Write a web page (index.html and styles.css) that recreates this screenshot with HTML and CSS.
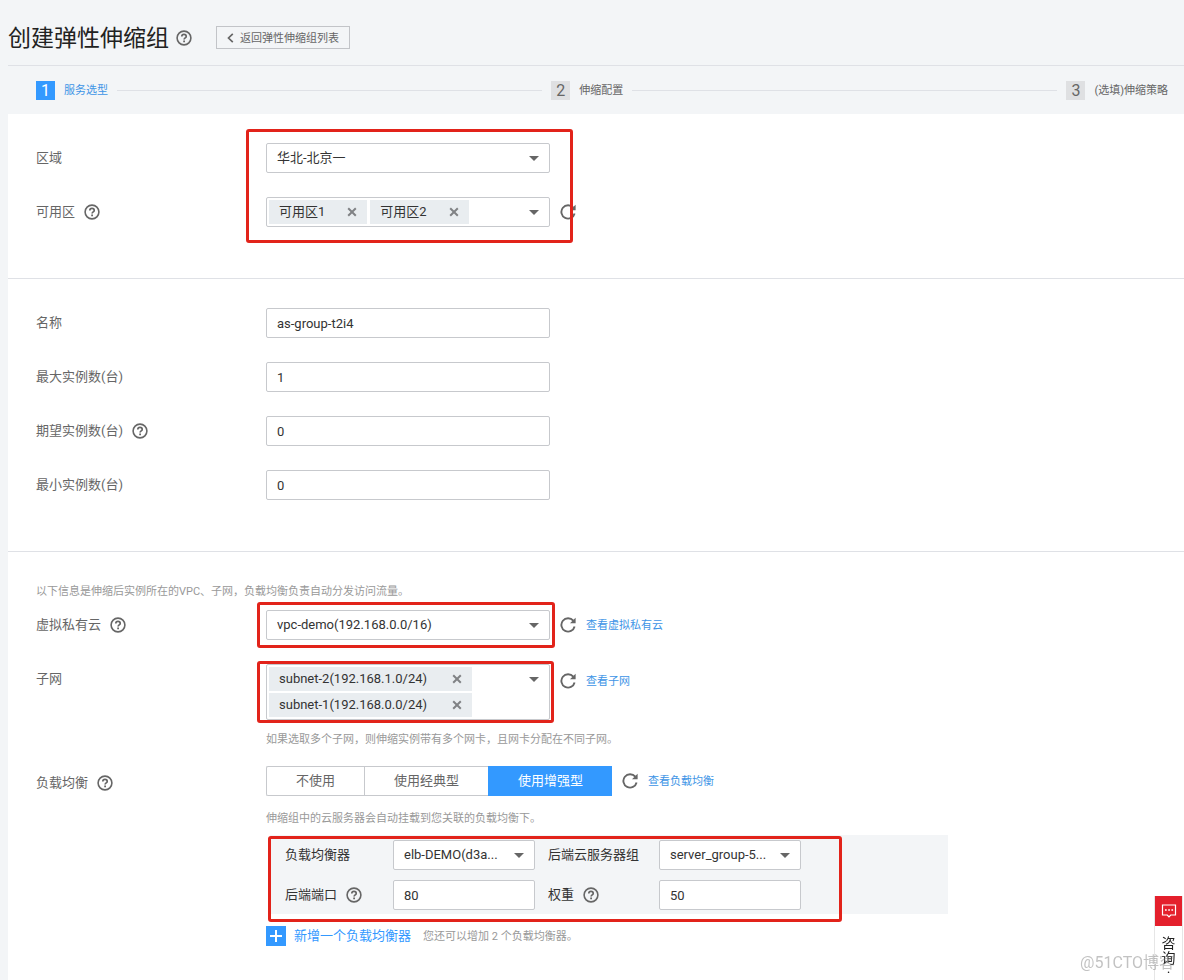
FILE: index.html
```html
<!DOCTYPE html>
<html lang="zh-CN">
<head>
<meta charset="utf-8">
<meta name="viewport" content="width=device-width, initial-scale=1">
<title>创建弹性伸缩组</title>
<link rel="stylesheet" href="styles.css">
</head>
<body>
<svg class="sprite" aria-hidden="true">
  <symbol id="help" viewBox="0 0 16 16"><circle cx="8" cy="8" r="6.9" fill="none" stroke="currentColor" stroke-width="1.6"/><path d="M5.800 6.500C5.800 5.100 6.700 4.400 8 4.400s2.200.8 2.200 2c0 1.500-2.100 1.600-2.100 3.200" fill="none" stroke="currentColor" stroke-width="1.700"/><path d="M7.200 10.500h1.800v1.700H7.200z" fill="currentColor"/></symbol>
  <symbol id="refresh" viewBox="0 0 16 16"><path d="M13.300 3.700A6.700 6.700 0 1 0 14.600 9.500" fill="none" stroke="currentColor" stroke-width="1.900"/><path d="M15.600.7v5.600H10z" fill="currentColor"/></symbol>
  <symbol id="close" viewBox="0 0 10 10"><path d="M1.200 1.200l7.600 7.600M8.800 1.200L1.200 8.800" fill="none" stroke="currentColor" stroke-width="2"/></symbol>
</svg>

<header class="page-head">
  <h1 class="title">创建弹性伸缩组</h1>
  <button class="icon-btn" type="button" aria-label="帮助"><svg class="icon"><use href="#help"/></svg></button>
  <button class="back" type="button"><svg class="chevron" viewBox="0 0 7 10"><path d="M5.800.8L1.500 5l4.300 4.200" fill="none" stroke="currentColor" stroke-width="1.700"/></svg><span class="small">返回弹性伸缩组列表</span></button>
</header>

<ol class="steps">
  <li class="step step-active"><span class="step-no">1</span><span class="small">服务选型</span></li>
  <li class="step"><span class="step-no">2</span><span class="small">伸缩配置</span></li>
  <li class="step"><span class="step-no">3</span><span class="small">(选填)伸缩策略</span></li>
</ol>

<main class="form">
  <section class="section">
    <div class="row">
      <div class="label"><label for="region">区域</label></div>
      <div class="line">
        <div class="select field"><select id="region"><option>华北-北京一</option></select></div>
      </div>
    </div>
    <div class="row">
      <div class="label"><span id="zone-label">可用区</span><button class="icon-btn" type="button" aria-label="可用区帮助"><svg class="icon"><use href="#help"/></svg></button></div>
      <div class="line">
        <div class="multi field" role="group" aria-labelledby="zone-label">
          <span class="tag">可用区1<button class="remove" type="button" aria-label="移除可用区1"><svg class="cross"><use href="#close"/></svg></button></span>
          <span class="tag">可用区2<button class="remove" type="button" aria-label="移除可用区2"><svg class="cross"><use href="#close"/></svg></button></span>
        </div>
        <button class="icon-btn" type="button" aria-label="刷新可用区"><svg class="icon"><use href="#refresh"/></svg></button>
      </div>
    </div>
    <div class="mark mark-region"></div>
  </section>

  <section class="section">
    <div class="row">
      <div class="label"><label for="name">名称</label></div>
      <input class="input field" id="name" type="text" value="as-group-t2i4">
    </div>
    <div class="row">
      <div class="label"><label for="max">最大实例数(台)</label></div>
      <input class="input field" id="max" type="text" value="1">
    </div>
    <div class="row">
      <div class="label"><label for="want">期望实例数(台)</label><button class="icon-btn" type="button" aria-label="期望实例数帮助"><svg class="icon"><use href="#help"/></svg></button></div>
      <input class="input field" id="want" type="text" value="0">
    </div>
    <div class="row">
      <div class="label"><label for="min">最小实例数(台)</label></div>
      <input class="input field" id="min" type="text" value="0">
    </div>
  </section>

  <section class="section network">
    <p class="hint intro">以下信息是伸缩后实例所在的VPC、子网，负载均衡负责自动分发访问流量。</p>
    <div class="row">
      <div class="label"><label for="vpc">虚拟私有云</label><button class="icon-btn" type="button" aria-label="虚拟私有云帮助"><svg class="icon"><use href="#help"/></svg></button></div>
      <div class="line">
        <div class="marked">
          <div class="select field"><select id="vpc"><option>vpc-demo(192.168.0.0/16)</option></select></div>
          <div class="mark mark-vpc"></div>
        </div>
        <button class="icon-btn" type="button" aria-label="刷新虚拟私有云"><svg class="icon"><use href="#refresh"/></svg></button>
        <a class="link small" href="#">查看虚拟私有云</a>
      </div>
    </div>
    <div class="row">
      <div class="label"><span id="subnet-label">子网</span></div>
      <div>
        <div class="line line-top">
          <div class="marked">
            <div class="multi field stacked" role="group" aria-labelledby="subnet-label">
              <span class="tag">subnet-2(192.168.1.0/24)<button class="remove" type="button" aria-label="移除subnet-2"><svg class="cross"><use href="#close"/></svg></button></span>
              <span class="tag">subnet-1(192.168.0.0/24)<button class="remove" type="button" aria-label="移除subnet-1"><svg class="cross"><use href="#close"/></svg></button></span>
            </div>
            <div class="mark mark-subnet"></div>
          </div>
          <div class="line line-tools">
            <button class="icon-btn" type="button" aria-label="刷新子网"><svg class="icon"><use href="#refresh"/></svg></button>
            <a class="link small" href="#">查看子网</a>
          </div>
        </div>
        <p class="hint below-field">如果选取多个子网，则伸缩实例带有多个网卡，且网卡分配在不同子网。</p>
      </div>
    </div>
    <div class="row balance">
      <div class="label label-low"><span id="elb-label">负载均衡</span><button class="icon-btn" type="button" aria-label="负载均衡帮助"><svg class="icon"><use href="#help"/></svg></button></div>
      <div class="balance-body">
        <div class="line">
          <div class="segments" role="group" aria-labelledby="elb-label">
            <button class="segment" type="button" aria-pressed="false">不使用</button>
            <button class="segment" type="button" aria-pressed="false">使用经典型</button>
            <button class="segment segment-on" type="button" aria-pressed="true">使用增强型</button>
          </div>
          <button class="icon-btn" type="button" aria-label="刷新负载均衡"><svg class="icon"><use href="#refresh"/></svg></button>
          <a class="link small" href="#">查看负载均衡</a>
        </div>
        <p class="hint below-segments">伸缩组中的云服务器会自动挂载到您关联的负载均衡下。</p>
        <div class="panel">
          <div class="label"><label for="elb">负载均衡器</label></div>
          <div class="select"><select id="elb"><option>elb-DEMO(d3a...</option></select></div>
          <div class="label second"><label for="group">后端云服务器组</label></div>
          <div class="select"><select id="group"><option>server_group-5...</option></select></div>
          <div class="label"><label for="port">后端端口</label><button class="icon-btn" type="button" aria-label="后端端口帮助"><svg class="icon"><use href="#help"/></svg></button></div>
          <input class="input" id="port" type="text" value="80">
          <div class="label second"><label for="weight">权重</label><button class="icon-btn" type="button" aria-label="权重帮助"><svg class="icon"><use href="#help"/></svg></button></div>
          <input class="input" id="weight" type="text" value="50">
          <div class="mark mark-panel"></div>
        </div>
        <div class="add-row">
          <button class="add" type="button"><svg class="plus" viewBox="0 0 20 20"><path d="M0 0h20v20H0z" fill="#3399ff"/><path d="M10 4v12M4 10h12" stroke="#fff" stroke-width="2"/></svg>新增一个负载均衡器</button>
          <span class="hint">您还可以增加 2 个负载均衡器。</span>
        </div>
      </div>
    </div>
  </section>
</main>

<div class="watermark">@51CTO博客</div>
<aside class="consult">
  <button class="consult-btn" type="button" aria-label="在线咨询"><svg class="chat" viewBox="0 0 16 16"><path d="M1.500 2h13v10H9.700L8 13.800 6.300 12H1.500z" fill="none" stroke="currentColor" stroke-width="1.200"/><path d="M4 7h1.700M7.200 7h1.700M10.400 7h1.700" stroke="currentColor" stroke-width="1.400"/></svg></button>
  <span class="consult-text">咨询·</span>
</aside>
</body>
</html>
```
FILE: styles.css
```css
* {
  box-sizing: border-box;
}

body {
  margin: 0;
  min-height: 100vh;
  display: flex;
  flex-direction: column;
  padding-left: 8px;
  background: #f3f5f7;
  color: #666;
  font: 13px/20px Roboto, "Noto Sans CJK SC", sans-serif;
}

button,
input,
select {
  margin: 0;
  font: inherit;
  color: inherit;
}

button {
  padding: 0;
  border: 0;
  background: none;
  cursor: pointer;
}

p {
  margin: 0;
}

.sprite {
  position: absolute;
  width: 0;
  height: 0;
}

.icon-btn {
  flex: none;
  display: flex;
  color: #666;
}

.icon {
  width: 16px;
  height: 16px;
}

.small,
.hint {
  padding-top: 2px;
  font-size: 11px;
}

/* Header */
.page-head {
  display: flex;
  align-items: center;
  padding-top: 10px;
  height: 66px;
  border-bottom: 1px solid #dfe1e6;
}

.title {
  margin: 0 7px 0 0;
  padding-top: 3px;
  color: #222;
  font-size: 23px;
  line-height: 32px;
  font-weight: 400;
}

.back {
  display: flex;
  align-items: center;
  gap: 6px;
  height: 23px;
  margin-left: 24px;
  padding: 0 10px;
  border: 1px solid #c2c4c8;
}

.chevron {
  width: 7px;
  height: 10px;
}

/* Steps */
.steps {
  display: flex;
  align-items: center;
  margin: 0;
  padding: 13px 16px 13px 28px;
  list-style: none;
}

.step {
  flex: none;
  display: flex;
  align-items: center;
  gap: 9px;
}

.step:not(:last-child) {
  flex: 1 1 0;
}

.step:not(:last-child)::after {
  content: "";
  flex: 1;
  height: 1px;
  margin-right: 9px;
  background: #dfe1e6;
}

.step-no {
  width: 19px;
  height: 19px;
  background: #dfe0e2;
  font-size: 16px;
  line-height: 19px;
  text-align: center;
}

.step-active {
  color: #3d94e6;
}

.step-active .step-no {
  background: #3399ff;
  color: #fff;
}

/* Form */
.form {
  flex: 1;
  background: #fff;
}

.section {
  position: relative;
  display: grid;
  gap: 24px;
  padding: 29px 28px 51px;
}

.section + .section {
  border-top: 1px solid #dfe1e6;
}

.section.network {
  padding: 28px 28px 16px;
}

.row {
  display: flex;
  align-items: flex-start;
}

.label {
  display: flex;
  align-items: center;
  gap: 9px;
  height: 30px;
}

.row > .label {
  flex: none;
  width: 230px;
}

.row > .label-low {
  height: 34px;
}

.field {
  width: 284px;
}

.line {
  display: flex;
  align-items: center;
  gap: 10px;
}

.line-top {
  align-items: flex-start;
}

.line-tools {
  height: 34px;
}

.input,
.select select {
  height: 30px;
  padding: 0 10px;
  border: 1px solid #c7c9cd;
  border-radius: 2px;
  background: #fff;
  color: #333;
}

.select {
  position: relative;
}

.select select {
  display: block;
  width: 100%;
  appearance: none;
}

.select::after,
.multi::after {
  content: "";
  position: absolute;
  top: 13px;
  right: 11px;
  border: 5px solid transparent;
  border-top-color: #666;
  border-bottom: 0;
  pointer-events: none;
}

.multi::after {
  top: 12px;
  right: 10px;
}

.multi {
  position: relative;
  display: flex;
  flex-wrap: wrap;
  gap: 2px 3px;
  padding: 2px 40px 2px 2px;
  border: 1px solid #c7c9cd;
  border-radius: 2px;
}

.tag {
  display: flex;
  align-items: center;
  gap: 22px;
  height: 24px;
  padding: 0 10px;
  background: #e9edf0;
  color: #333;
}

.stacked .tag {
  gap: 25px;
}

.remove {
  display: flex;
  color: #808285;
}

.cross {
  width: 10px;
  height: 10px;
}

.link {
  color: #3d94e6;
  text-decoration: none;
}

.hint {
  color: #999;
}

.intro {
  margin-bottom: -16px;
}

.below-field {
  margin-top: 8px;
}

.marked {
  position: relative;
  flex: none;
}

.balance {
  margin-top: -8px;
}

.balance-body {
  flex: 0 1 682px;
}

.segments {
  display: flex;
}

.segment {
  height: 30px;
  padding: 0 29px;
  border: 1px solid #c7c9cd;
  border-right-width: 0;
}

.segment:first-child {
  border-radius: 2px 0 0 2px;
}

.segment-on {
  border-color: #3399ff;
  background: #3399ff;
  color: #fff;
}

.below-segments {
  margin-top: 11px;
}

.panel {
  position: relative;
  display: grid;
  grid-template-columns: 108px 142px 124px 142px;
  gap: 10px 0;
  margin: 6px 0 0 4px;
  padding: 5px 15px 4px;
  background: #f3f5f7;
  color: #333;
}

.second {
  padding-left: 13px;
}

.panel .input {
  width: 100%;
}

.add-row {
  display: flex;
  align-items: center;
  gap: 12px;
  margin-top: 11px;
}

.add {
  display: flex;
  align-items: center;
  gap: 8px;
  color: #3399ff;
}

.plus {
  width: 20px;
  height: 20px;
}

/* Red highlight frames drawn over the form */
.mark {
  position: absolute;
  border: 3px solid #e2231a;
  border-radius: 3px;
  pointer-events: none;
}

.mark-region {
  top: 15px;
  bottom: 35px;
  left: 238px;
  width: 327px;
}

.mark-vpc {
  inset: -8px -5px -8px -9px;
}

.mark-subnet {
  inset: -3px -4px -3px -9px;
}

.mark-panel {
  top: 1px;
  bottom: -8px;
  left: -2px;
  width: 574px;
}

/* Floating items */
.consult {
  position: fixed;
  right: 1px;
  bottom: 0;
  width: 29px;
  height: 84px;
  border: 1px solid #e6e6e6;
  border-width: 0 1px;
  background: #fff;
}

.consult-btn {
  display: grid;
  place-items: center;
  width: 100%;
  height: 30px;
  background: #e4202c;
  color: #fff;
}

.chat {
  width: 16px;
  height: 16px;
}

.consult-text {
  display: block;
  width: 14px;
  margin: 10px auto 0;
  color: #222;
  font-size: 14px;
  line-height: 15px;
  text-align: center;
  word-break: break-all;
}

.watermark {
  position: fixed;
  right: 9px;
  bottom: 7px;
  z-index: 1;
  color: rgba(120, 120, 120, 0.45);
  font-size: 16px;
  pointer-events: none;
}
```
